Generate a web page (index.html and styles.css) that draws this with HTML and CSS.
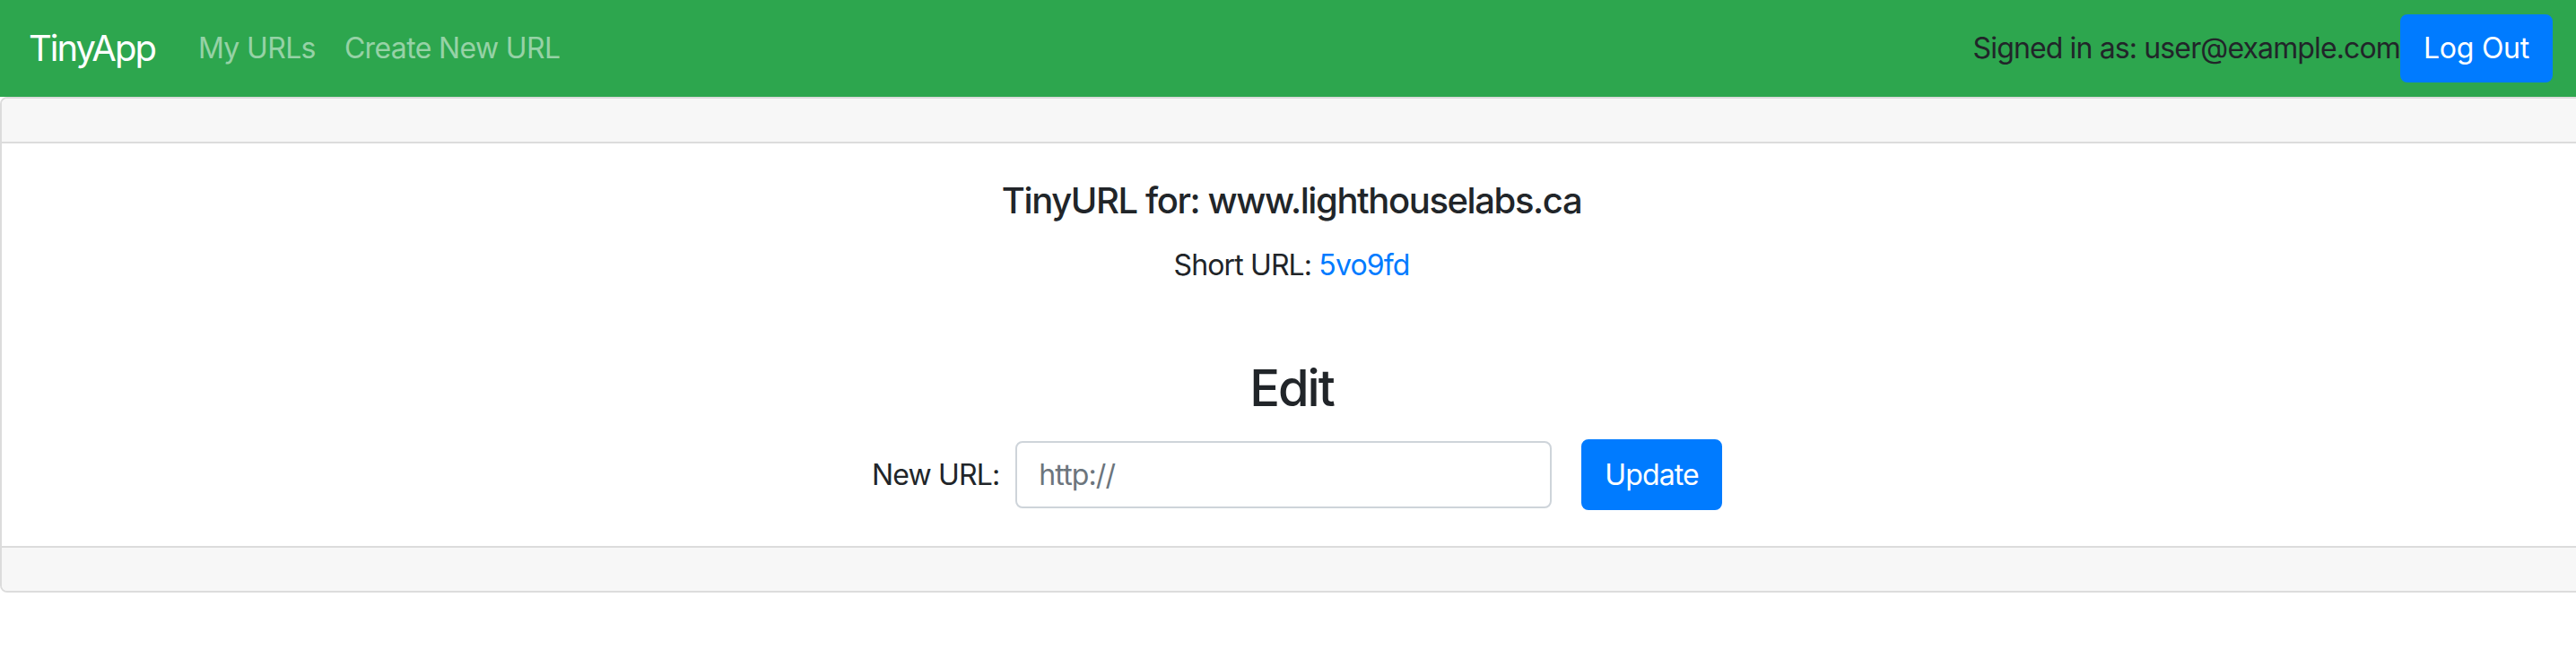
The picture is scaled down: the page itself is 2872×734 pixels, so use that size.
FILE: index.html
```html
<!DOCTYPE html>
<html lang="en">
<head>
<meta charset="utf-8">
<title>TinyApp</title>
<link rel="stylesheet" href="styles.css">
</head>
<body>
<nav class="navbar">
  <a class="brand" href="#">TinyApp</a>
  <div class="nav-links">
    <a class="nav-link" href="#">My URLs</a>
    <a class="nav-link" href="#">Create New URL</a>
  </div>
  <div class="nav-right">
    <span class="signed">Signed in as: user@example.com</span>
    <button class="btn btn-primary logout" type="button">Log Out</button>
  </div>
</nav>
<div class="card">
  <div class="card-header"></div>
  <div class="card-body">
    <h5 class="card-title">TinyURL for: www.lighthouselabs.ca</h5>
    <p class="card-text">Short URL: <a href="#" class="short">5vo9fd</a></p>
    <h3 class="edit-title">Edit</h3>
    <form class="edit-form">
      <label class="edit-label" for="longURL">New URL:</label>
      <input class="form-control" id="longURL" type="text" placeholder="http://">
      <button class="btn btn-primary update" type="submit">Update</button>
    </form>
  </div>
  <div class="card-footer"></div>
</div>
</body>
</html>
```

FILE: styles.css
```css
* { box-sizing: border-box; }
html, body { margin: 0; padding: 0; }
body {
  font-family: Inter, "Noto Sans", "Liberation Sans", sans-serif;
  font-size: 32px;
  line-height: 1.5;
  letter-spacing: -0.027em;
  color: #212529;
  background: #fff;
  overflow: hidden;
}
a { text-decoration: none; }

.navbar {
  display: flex;
  align-items: center;
  height: 108px;
  padding: 0 26px 0 32px;
  background: #2da64e;
}
.brand {
  font-size: 40px;
  line-height: 60px;
  letter-spacing: -0.05em;
  color: #fff;
  margin-right: 32px;
}
.nav-links { display: flex; }
.nav-link {
  padding: 0 16px;
  color: rgba(255, 255, 255, 0.5);
  font-size: 32px;
  line-height: 48px;
  letter-spacing: -0.02em;
}
.nav-right {
  margin-left: auto;
  display: flex;
  align-items: center;
}
.signed { color: #212529; }

.btn {
  font-family: inherit;
  font-size: 32px;
  line-height: 48px;
  letter-spacing: -0.027em;
  border: 2px solid #007bff;
  border-radius: 8px;
  padding: 12px 24px;
  cursor: pointer;
}
.btn-primary { background: #007bff; color: #fff; }
.logout {
  height: 76px;
  letter-spacing: -0.008em;
}

.card {
  margin-right: -8px;
  border: 2px solid #dcdcdc;
  border-radius: 8px;
  background: #fff;
}
.card-header {
  height: 50px;
  background: #f7f7f7;
  border-bottom: 2px solid #dcdcdc;
  border-radius: 6px 6px 0 0;
}
.card-footer {
  height: 50px;
  background: #f7f7f7;
  border-top: 2px solid #dcdcdc;
  border-radius: 0 0 6px 6px;
}
.card-body {
  padding: 40px;
  text-align: center;
}
.card-title {
  margin: 0 0 24px;
  font-size: 40px;
  line-height: 48px;
  font-weight: 500;
  letter-spacing: -0.035em;
}
.card-text {
  margin: 0 0 80px;
  font-size: 32px;
  line-height: 48px;
}
.short { color: #007bff; }
.edit-title {
  margin: 0 0 23px;
  font-size: 56px;
  line-height: 67px;
  font-weight: 500;
  letter-spacing: -0.035em;
}
.edit-form {
  display: flex;
  align-items: center;
  justify-content: center;
  padding-left: 12px;
}
.edit-label { margin-right: 18px; }
.form-control {
  width: 598px;
  height: 75px;
  padding: 12px 24px;
  font-family: inherit;
  font-size: 32px;
  letter-spacing: -0.027em;
  color: #495057;
  border: 2px solid #ced4da;
  border-radius: 8px;
  background: #fff;
}
.form-control::placeholder { color: #6c757d; }
.update {
  margin-left: 33px;
  height: 79px;
}
```
